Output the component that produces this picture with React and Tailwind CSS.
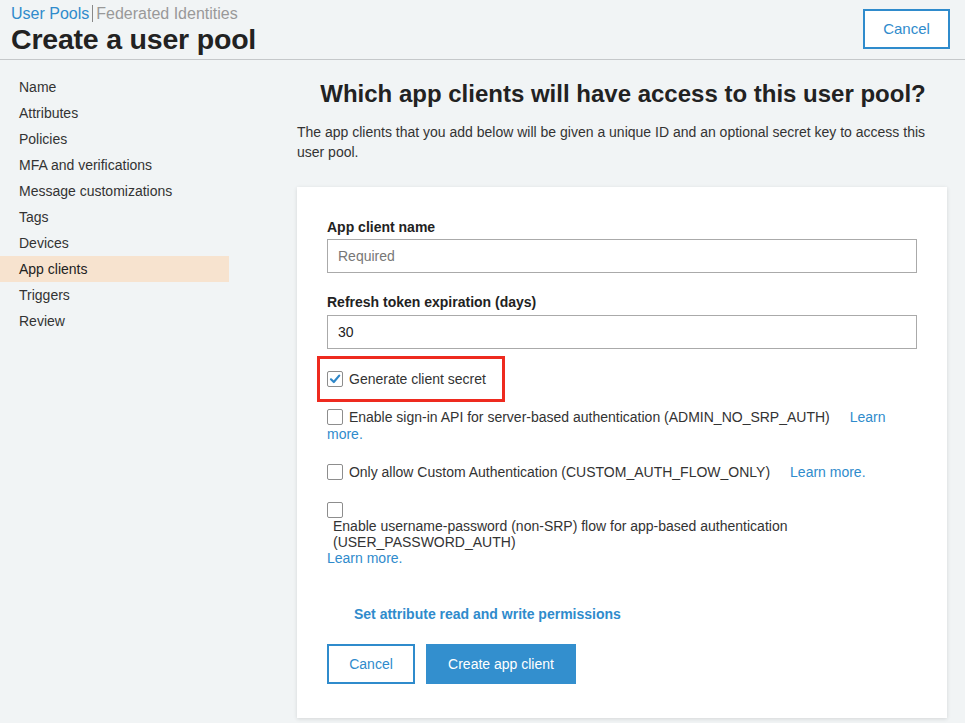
import React from 'react';

const navItems = ['Name', 'Attributes', 'Policies', 'MFA and verifications', 'Message customizations', 'Tags', 'Devices', 'App clients', 'Triggers', 'Review'];

function Box({ checked }) {
  return (
    <span className="inline-flex align-[-3px] items-center justify-center w-4 h-4 border border-[#8d8d8d] rounded-[2px] bg-white shrink-0">
      {checked && (
        <svg width="12" height="12" viewBox="0 0 12 12">
          <path d="M2 6.3 L4.8 9 L10.2 2.6" fill="none" stroke="#2f87c8" strokeWidth="2.2" strokeLinecap="round" strokeLinejoin="round" />
        </svg>
      )}
    </span>
  );
}

export default function App() {
  return (
    <div className="min-h-[723px] bg-[#f1f4f5] text-[#333] font-['Liberation_Sans',Arial,sans-serif]">
      <div className="flex items-start justify-between border-b border-[#c5c8ca] h-[60px] pl-[11px] pr-[15px]">
        <div>
          <div className="pt-[4px] text-[16px] leading-[19px]">
            <span className="text-[#2f8bcc]">User Pools</span>
            <span className="inline-block w-px h-[17px] bg-[#888] mx-[3px] align-[-3px]" />
            <span className="text-[#999]">Federated Identities</span>
          </div>
          <h1 className="text-[28.5px] leading-[32px] font-bold text-[#222] tracking-[-0.2px]">Create a user pool</h1>
        </div>
        <button className="mt-[9px] w-[87px] h-[40px] border-2 border-[#2f8bcc] bg-white text-[#2f8bcc] text-[15px]">Cancel</button>
      </div>

      <div className="flex">
        <div className="w-[229px] pt-[14px] shrink-0">
          {navItems.map((n) => (
            <div key={n} className={`h-[26px] leading-[26px] pl-[19px] text-[14px] ${n === 'App clients' ? 'bg-[#f7e3cf] text-[#222]' : 'text-[#333]'}`}>{n}</div>
          ))}
        </div>

        <div className="ml-[68px] w-[650px]">
          <h2 className="pt-[20px] text-center text-[24px] leading-[28px] font-bold text-[#222] pl-[2px]">Which app clients will have access to this user pool?</h2>
          <p className="mt-[14px] text-[14px] leading-[20px] text-[#333]">The app clients that you add below will be given a unique ID and an optional secret key to access this user pool.</p>

          <div className="mt-[25px] bg-white shadow-[0_1px_4px_rgba(0,0,0,0.12)] pl-[30px] pr-[30px] pt-[31px] pb-[34px]">
            <div className="text-[14px] font-bold leading-[18px] text-[#222]">App client name</div>
            <div className="mt-[3px] h-[34px] border border-[#aaa] px-[10px] flex items-center text-[14px] text-[#777]">Required</div>

            <div className="mt-[20px] text-[14px] font-bold leading-[18px] text-[#222]">Refresh token expiration (days)</div>
            <div className="mt-[4px] h-[34px] border border-[#aaa] px-[10px] flex items-center text-[14px] text-[#222]">30</div>

            <div className="mt-[7px] -ml-[10px] w-[188px] h-[46px] border-[3px] border-[#ee2a1f] flex items-center pl-[7px] gap-[6px] text-[14px]">
              <Box checked />
              <span>Generate client secret</span>
            </div>

            <div className="mt-[7px] text-[14px] leading-[17px] pr-[30px]">
              <Box /> <span className="ml-[2px]">Enable sign-in API for server-based authentication (ADMIN_NO_SRP_AUTH)</span>
              <a className="ml-[20px] text-[#2f8bcc]">Learn more.</a>
            </div>

            <div className="mt-[21px] text-[14px] leading-[17px]">
              <Box /> <span className="ml-[2px]">Only allow Custom Authentication (CUSTOM_AUTH_FLOW_ONLY)</span>
              <a className="ml-[20px] text-[#2f8bcc]">Learn more.</a>
            </div>

            <div className="mt-[21px] text-[14px] leading-[16px]">
              <Box />
              <div className="pl-[6px]">Enable username-password (non-SRP) flow for app-based authentication<br />(USER_PASSWORD_AUTH)</div>
              <a className="block text-[#2f8bcc]">Learn more.</a>
            </div>

            <div className="mt-[39px] pl-[27px] text-[14px] font-bold text-[#2f8bcc] leading-[18px]">Set attribute read and write permissions</div>

            <div className="mt-[21px] flex gap-[11px]">
              <button className="w-[88px] h-[40px] border-2 border-[#2f8bcc] bg-white text-[#2f8bcc] text-[14px]">Cancel</button>
              <button className="w-[150px] h-[40px] bg-[#338fce] text-white text-[14px]">Create app client</button>
            </div>
          </div>
        </div>
      </div>
    </div>
  );
}
